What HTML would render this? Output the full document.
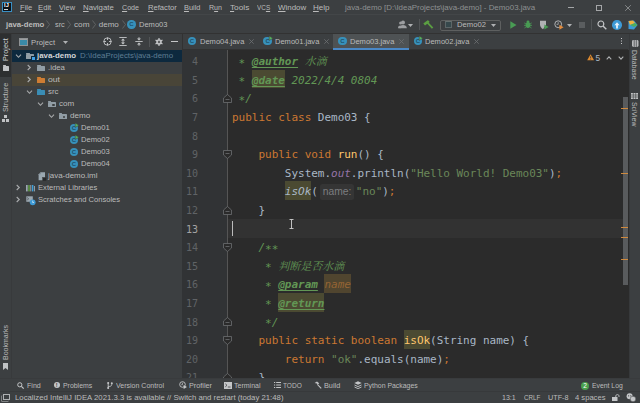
<!DOCTYPE html>
<html><head><meta charset="utf-8"><title>java-demo - Demo03.java</title>
<style>
*{box-sizing:border-box;margin:0;padding:0}
html,body{width:640px;height:403px;overflow:hidden;background:#3c3f41}
body{position:relative;font-family:"Liberation Sans","Noto Sans CJK SC",sans-serif;font-size:7.6px;color:#bbbbbb;line-height:1}
.a{position:absolute;white-space:nowrap}
.t{position:absolute;white-space:nowrap;line-height:10px;height:10px}
.v{position:absolute;white-space:nowrap;line-height:9px;height:9px;transform-origin:0 0}
u{text-decoration:underline;text-underline-offset:1px;text-decoration-thickness:0.6px}
svg{position:absolute;overflow:visible}
#ed{position:absolute;left:182px;top:50px;width:447px;height:327.5px;background:#2b2b2b;overflow:hidden}
#gut{position:absolute;left:0;top:0;width:46px;height:328px;background:#313335;border-right:1px solid #555555}
.ln{position:absolute;left:0;width:16.1px;text-align:right;font-family:"DejaVu Sans Mono","Liberation Mono",monospace;font-size:10px;color:#606366;line-height:18.6px;height:18.6px}
.cl{position:absolute;left:50px;font-family:"DejaVu Sans Mono","Liberation Mono","Noto Serif CJK SC",monospace;font-size:11px;letter-spacing:-0.02px;color:#a9b7c6;line-height:18.6px;height:18.6px;white-space:pre}
.k{color:#cc7832}.s{color:#6a8759}.d{color:#629755;font-style:italic}
.dt{color:#629755;font-style:italic;font-weight:bold;text-decoration:underline;text-decoration-thickness:1px;text-underline-offset:1.5px}
.as{position:relative;top:1.6px}
.f{color:#ffc66d}.i{font-style:italic}.p{color:#9373a5;font-style:italic}
.hl{background:#4b4a32;padding:4.1px 0 1.7px 0}
.hint{display:inline-block;vertical-align:top;margin:1px 1.4px 0 1.9px;height:15.8px;line-height:15.4px;width:34.7px;text-align:center;font-family:"Liberation Sans",sans-serif;font-size:10.3px;letter-spacing:0;color:#7c7e80;background:#353535;border-radius:2.5px;font-style:normal}
.cicon{width:8.4px;height:8.4px;border-radius:50%;background:#3791bb;color:#1f506a;font-size:6px;font-weight:bold;line-height:8.4px;text-align:center;font-family:"Liberation Sans",sans-serif}
.fold{position:absolute;width:8.4px;height:5.4px;border-radius:0.6px}
.fold::before{content:"";position:absolute;left:0;top:-1px;width:3.6px;height:1.4px;background:inherit;border-radius:0.5px 0.5px 0 0}
</style></head><body>
<!-- ===== menu bar ===== -->
<div class="a" style="left:0;top:0;width:640px;height:15px;background:#3c3f41"></div>
<div class="a" style="left:2px;top:2px;width:10px;height:10px;background:#0c1118;border:1px solid #3a8fc4"></div>
<div class="a" style="left:3.9px;top:3.4px;font-size:5.6px;font-weight:bold;color:#fff;line-height:5px;letter-spacing:0.3px">IJ</div>
<div class="a" style="left:3.9px;top:9.3px;width:3.8px;height:0.8px;background:#d8d8d8"></div>
<div class="t" style="left:19.5px;top:2.5px;font-size:8.0px;transform-origin:0 0;transform:scaleX(0.951);"><u>F</u>ile</div>
<div class="t" style="left:38px;top:2.5px;font-size:8.0px;transform-origin:0 0;transform:scaleX(0.960);"><u>E</u>dit</div>
<div class="t" style="left:59px;top:2.5px;font-size:8.0px;transform-origin:0 0;transform:scaleX(0.930);"><u>V</u>iew</div>
<div class="t" style="left:82.5px;top:2.5px;font-size:8.0px;transform-origin:0 0;transform:scaleX(0.974);"><u>N</u>avigate</div>
<div class="t" style="left:121.75px;top:2.5px;font-size:8.0px;transform-origin:0 0;transform:scaleX(0.889);"><u>C</u>ode</div>
<div class="t" style="left:147.5px;top:2.5px;font-size:8.0px;transform-origin:0 0;transform:scaleX(0.951);"><u>R</u>efactor</div>
<div class="t" style="left:184.25px;top:2.5px;font-size:8.0px;transform-origin:0 0;transform:scaleX(0.927);"><u>B</u>uild</div>
<div class="t" style="left:208.75px;top:2.5px;font-size:8.0px;transform-origin:0 0;transform:scaleX(0.886);">R<u>u</u>n</div>
<div class="t" style="left:229.5px;top:2.5px;font-size:8.0px;transform-origin:0 0;transform:scaleX(1.031);"><u>T</u>ools</div>
<div class="t" style="left:257px;top:2.5px;font-size:8.0px;transform-origin:0 0;transform:scaleX(0.800);">VC<u>S</u></div>
<div class="t" style="left:277.5px;top:2.5px;font-size:8.0px;transform-origin:0 0;transform:scaleX(0.992);"><u>W</u>indow</div>
<div class="t" style="left:313px;top:2.5px;font-size:8.0px;transform-origin:0 0;transform:scaleX(1.004);"><u>H</u>elp</div>
<div class="t" style="left:345px;top:2.5px;font-size:8.0px;transform-origin:0 0;transform:scaleX(0.988);color:#8e9192">java-demo [D:\IdeaProjects\java-demo] - Demo03.java</div>
<div class="a" style="left:568px;top:7.2px;width:6px;height:0.7px;background:#a4a6a8"></div>
<div class="a" style="left:596.2px;top:4.5px;width:6px;height:6px;border:0.7px solid #a4a6a8"></div>
<svg style="left:624.5px;top:4.5px" width="6" height="6" viewBox="0 0 6 6"><path d="M0.2 0.2L5.8 5.8M5.8 0.2L0.2 5.8" stroke="#a4a6a8" stroke-width="0.7" fill="none"/></svg>
<!-- ===== nav bar ===== -->
<div class="a" style="left:0;top:14.3px;width:640px;height:0.8px;background:#434648"></div>
<div class="a" style="left:0;top:15px;width:640px;height:19px;background:#3c3f41;border-bottom:1px solid #323232"></div>
<div class="t" style="left:5.5px;top:19.6px;font-size:8.0px;font-weight:bold;transform-origin:0 0;transform:scaleX(0.969);">java-demo</div>
<div class="t" style="left:54.5px;top:19.6px;font-size:8.0px;transform-origin:0 0;transform:scaleX(0.913);">src</div>
<div class="t" style="left:73.75px;top:19.6px;font-size:8.0px;transform-origin:0 0;transform:scaleX(1.025);">com</div>
<div class="t" style="left:98.75px;top:19.6px;font-size:8.0px;transform-origin:0 0;transform:scaleX(1.000);">demo</div>
<div class="t" style="left:138.75px;top:19.6px;font-size:8.0px;transform-origin:0 0;transform:scaleX(0.941);">Demo03</div>
<svg style="left:46px;top:20px" width="4" height="9" viewBox="0 0 4 9"><path d="M0.5 0.5L3.5 4.5L0.5 8.5" stroke="#6e7173" stroke-width="0.7" fill="none"/></svg>
<svg style="left:67px;top:20px" width="4" height="9" viewBox="0 0 4 9"><path d="M0.5 0.5L3.5 4.5L0.5 8.5" stroke="#6e7173" stroke-width="0.7" fill="none"/></svg>
<svg style="left:91.5px;top:20px" width="4" height="9" viewBox="0 0 4 9"><path d="M0.5 0.5L3.5 4.5L0.5 8.5" stroke="#6e7173" stroke-width="0.7" fill="none"/></svg>
<svg style="left:121.5px;top:20px" width="4" height="9" viewBox="0 0 4 9"><path d="M0.5 0.5L3.5 4.5L0.5 8.5" stroke="#6e7173" stroke-width="0.7" fill="none"/></svg>
<div class="a cicon" style="left:127.2px;top:20.2px">C</div>
<!-- ===== run toolbar ===== -->
<svg style="left:397.7px;top:20.3px" width="9" height="9" viewBox="0 0 9 9"><circle cx="5" cy="2.4" r="2" fill="#9d9fa1"/><path d="M1.4 8.2C1.4 5.6 3 4.9 5 4.9S8.8 5.6 8.8 8.2Z" fill="#9d9fa1"/><circle cx="2.6" cy="3" r="1.5" fill="#9d9fa1"/><path d="M0 8.2C0 6 1 5.4 2.6 5.4V8.2Z" fill="#9d9fa1"/></svg>
<svg style="left:408px;top:23.5px" width="5" height="3" viewBox="0 0 5 3"><path d="M0 0H5L2.5 3Z" fill="#afb1b3"/></svg>
<div class="a" style="left:419px;top:19px;width:1px;height:11px;background:#515456"></div>
<svg style="left:422.5px;top:19.8px" width="10.5" height="9" viewBox="0 0 10.5 9"><path d="M0.3 3.6L4.6 0.2L6.2 0.9L6.4 2.2L2 5.6Z" fill="#5b9e42"/><path d="M3.6 3L5 1.9L10.3 7.4L8.9 8.8Z" fill="#5b9e42"/></svg>
<div class="a" style="left:439.5px;top:19.5px;width:61.5px;height:11.5px;border:1px solid #5e6060;border-radius:2px;background:#3c3f41"></div>
<div class="a" style="left:444.8px;top:21.3px;width:7.4px;height:6.8px;border:0.8px solid #5c6668;border-top:1.4px solid #66706f;background:#36484c"></div>
<div class="t" style="left:457px;top:20.3px;font-size:7.65px">Demo02</div>
<svg style="left:491px;top:23.5px" width="5" height="3" viewBox="0 0 5 3"><path d="M0 0H5L2.5 3Z" fill="#afb1b3"/></svg>
<svg style="left:509.5px;top:21px" width="7" height="8" viewBox="0 0 7 8"><path d="M0.3 0.3L6.5 4L0.3 7.7Z" fill="#499c54"/></svg>
<svg style="left:524px;top:20.3px" width="8" height="9" viewBox="0 0 9 10"><ellipse cx="4.5" cy="5.6" rx="2.6" ry="3.4" fill="#499c54"/><circle cx="4.5" cy="2" r="1.6" fill="#499c54"/><path d="M0.3 3.2L2.4 4.6M8.7 3.2L6.6 4.6M0 6H9M0.5 9L2.4 7.6M8.5 9L6.6 7.6" stroke="#499c54" stroke-width="0.9" fill="none"/></svg>
<svg style="left:539px;top:20px" width="10" height="10" viewBox="0 0 10 10"><path d="M1 0.8H7V5L4 9.2C2 8 1 6.4 1 4.6Z" fill="#afb1b3"/><path d="M5.4 4.6L9.6 7L5.4 9.6Z" fill="#499c54"/></svg>
<svg style="left:553.5px;top:20px" width="10" height="10" viewBox="0 0 10 10"><circle cx="4.2" cy="4.2" r="3.4" fill="none" stroke="#afb1b3" stroke-width="1"/><path d="M4.2 2.2V4.4H2.6" stroke="#afb1b3" stroke-width="0.8" fill="none"/><path d="M5.4 4.8L9.6 7.2L5.4 9.8Z" fill="#e08a3c"/></svg>
<svg style="left:567px;top:23.5px" width="5" height="3" viewBox="0 0 5 3"><path d="M0 0H5L2.5 3Z" fill="#afb1b3"/></svg>
<div class="a" style="left:578.5px;top:21.5px;width:6.5px;height:6.5px;background:#5a5d5f"></div>
<div class="a" style="left:591px;top:19px;width:1px;height:11px;background:#515456"></div>
<svg style="left:596.5px;top:20px" width="10" height="10" viewBox="0 0 10 10"><circle cx="3.9" cy="3.9" r="2.9" fill="none" stroke="#c4c6c8" stroke-width="1.2"/><path d="M6 6L9.3 9.3" stroke="#c4c6c8" stroke-width="1.4"/></svg>
<div class="a" style="left:612px;top:20px;width:9.5px;height:9.5px;border-radius:50%;background:#3d9ad6"></div>
<svg style="left:614px;top:21.5px" width="6" height="7" viewBox="0 0 6 7"><path d="M3 0.3L5.6 3.2H3.9V6.4H2.1V3.2H0.4Z" fill="#e8f3fb"/></svg>
<svg style="left:628px;top:20px" width="10" height="10" viewBox="0 0 10 10"><path d="M0.5 1L6 0.5L9.5 5L6 9.5L0.5 9Z" fill="#3d9ad6"/><path d="M0.5 1L5 0.6L7 3L2 5Z" fill="#f0b23c"/><path d="M2 5L7 3L9.5 5L6 7Z" fill="#4fae5c"/></svg>
<!-- ===== left strip ===== -->
<div class="a" style="left:0;top:34px;width:12px;height:344px;background:#3c3f41;border-right:1px solid #383a3c"></div>
<div class="a" style="left:0;top:34px;width:11px;height:42.5px;background:#2d2f30"></div>
<div class="v" style="left:1px;top:61.3px;transform:rotate(-90deg);font-size:7.3px;color:#d0d2d4">Project</div>
<div class="fold" style="left:2.5px;top:66px;width:6.5px;height:4.6px;background:#c0c2c4"></div>
<div class="v" style="left:1px;top:112.2px;transform:rotate(-90deg);font-size:7.2px">Structure</div>
<svg style="left:2px;top:115px" width="7" height="7" viewBox="0 0 7 7"><rect x="2" y="0" width="3" height="3" fill="#c0c2c4"/><rect x="0" y="4" width="3" height="3" fill="#c0c2c4"/><rect x="4" y="4" width="3" height="3" fill="#c0c2c4"/></svg>
<div class="v" style="left:1px;top:359.8px;transform:rotate(-90deg);font-size:7px">Bookmarks</div>
<svg style="left:3px;top:363px" width="5" height="7" viewBox="0 0 5 7"><path d="M0 0H5V7L2.5 5L0 7Z" fill="#c0c2c4"/></svg>
<!-- ===== project panel ===== -->
<div class="a" style="left:12px;top:34px;width:170px;height:344px;background:#3c3f41"></div>
<div class="a" style="left:19px;top:38.1px;width:9px;height:7.5px;border:1.1px solid #8f9294;background:#3a8aa8;box-shadow:inset 0 1px 0 #9da0a2"></div>
<div class="t" style="left:30.5px;top:37.5px;font-size:8.0px;transform-origin:0 0;transform:scaleX(0.965);">Project</div>
<svg style="left:62.5px;top:40.5px" width="5" height="3" viewBox="0 0 5 3"><path d="M0 0H5L2.5 3Z" fill="#afb1b3"/></svg>
<svg style="left:103px;top:37px" width="9" height="9" viewBox="0 0 9 9"><circle cx="4.5" cy="4.5" r="3.7" fill="none" stroke="#c4c6c8" stroke-width="0.9"/><path d="M4.5 0.5V3M4.5 6V8.5M0.5 4.5H3M6 4.5H8.5" stroke="#c4c6c8" stroke-width="0.9"/></svg>
<svg style="left:119px;top:37px" width="8" height="9" viewBox="0 0 8 9"><path d="M0.3 0.5H7.7M0.3 8.5H7.7" stroke="#c4c6c8" stroke-width="0.9"/><path d="M4 1.6L6 3.6H2ZM4 7.4L6 5.4H2Z" fill="#c4c6c8"/><path d="M4 3V6" stroke="#c4c6c8" stroke-width="0.9"/></svg>
<svg style="left:135px;top:37px" width="8" height="9" viewBox="0 0 8 9"><path d="M0.3 4.5H7.7" stroke="#c4c6c8" stroke-width="0.9"/><path d="M4 3.4L6 1.4H2ZM4 5.6L6 7.6H2Z" fill="#c4c6c8"/><path d="M4 0.2V2M4 7V8.8" stroke="#c4c6c8" stroke-width="0.9"/></svg>
<div class="a" style="left:148.5px;top:37px;width:1px;height:10px;background:#515456"></div>
<svg style="left:154.5px;top:37.5px" width="8" height="8" viewBox="0 0 8 8"><circle cx="4" cy="4" r="2.1" fill="none" stroke="#c4c6c8" stroke-width="1.3"/><path d="M4 0V8M0.5 2L7.5 6M0.5 6L7.5 2" stroke="#c4c6c8" stroke-width="1.2"/><circle cx="4" cy="4" r="1" fill="#3c3f41"/></svg>
<div class="a" style="left:170.5px;top:41px;width:7px;height:1px;background:#c4c6c8"></div>
<div class="a" style="left:12px;top:50px;width:170px;height:12px;background:#0d293e"></div>
<div class="a" style="left:12px;top:74px;width:170px;height:12px;background:#494538"></div>
<svg style="left:14.7px;top:53.5px" width="7" height="4" viewBox="0 0 7 4"><path d="M1 0.7L3.5 3.3L6 0.7" stroke="#a8aaac" stroke-width="1.1" fill="none"/></svg>
<div class="fold" style="left:26px;top:53.7px;background:#919da5"></div>
<div class="a" style="left:31.3px;top:56.4px;width:4.6px;height:4.6px;background:#3fa0e6;border:0.6px solid #0d293e"></div>
<div class="t" style="left:37px;top:51px;font-size:7.9px;font-weight:bold;transform-origin:0 0;transform:scaleX(1.001);color:#d4d6d8">java-demo</div>
<div class="t" style="left:80px;top:51px;font-size:7.9px;transform-origin:0 0;transform:scaleX(1.001);color:#5f7d93">D:\IdeaProjects\java-demo</div>
<svg style="left:27px;top:64.1px" width="4" height="7" viewBox="0 0 4 7"><path d="M0.7 1L3.3 3.5L0.7 6" stroke="#a8aaac" stroke-width="1.1" fill="none"/></svg>
<div class="fold" style="left:37px;top:65.7px;background:#919da5"></div>
<div class="t" style="left:47.5px;top:63px;font-size:7.9px;transform-origin:0 0;transform:scaleX(0.992);">.idea</div>
<svg style="left:27px;top:76.1px" width="4" height="7" viewBox="0 0 4 7"><path d="M0.7 1L3.3 3.5L0.7 6" stroke="#a8aaac" stroke-width="1.1" fill="none"/></svg>
<div class="fold" style="left:37px;top:77.7px;background:#cf7d33"></div>
<div class="t" style="left:47.5px;top:75px;font-size:7.9px;transform-origin:0 0;transform:scaleX(1.093);">out</div>
<svg style="left:25.5px;top:89.7px" width="7" height="4" viewBox="0 0 7 4"><path d="M1 0.7L3.5 3.3L6 0.7" stroke="#a8aaac" stroke-width="1.1" fill="none"/></svg>
<div class="fold" style="left:37px;top:89.7px;background:#3a8db5"></div>
<div class="t" style="left:47.5px;top:87px;font-size:7.9px;transform-origin:0 0;transform:scaleX(0.996);">src</div>
<svg style="left:36.5px;top:101.7px" width="7" height="4" viewBox="0 0 7 4"><path d="M1 0.7L3.5 3.3L6 0.7" stroke="#a8aaac" stroke-width="1.1" fill="none"/></svg>
<div class="fold" style="left:47.9px;top:101.7px;background:#919da5"></div>
<div class="a" style="left:52.4px;top:104px;width:2.2px;height:2.2px;border-radius:50%;background:#3c3f41"></div>
<div class="t" style="left:58.75px;top:99px;font-size:7.9px;transform-origin:0 0;transform:scaleX(1.021);">com</div>
<svg style="left:47.5px;top:113.7px" width="7" height="4" viewBox="0 0 7 4"><path d="M1 0.7L3.5 3.3L6 0.7" stroke="#a8aaac" stroke-width="1.1" fill="none"/></svg>
<div class="fold" style="left:58.8px;top:113.7px;background:#919da5"></div>
<div class="a" style="left:63.3px;top:116px;width:2.2px;height:2.2px;border-radius:50%;background:#3c3f41"></div>
<div class="t" style="left:69.7px;top:111px;font-size:7.9px;transform-origin:0 0;transform:scaleX(1.028);">demo</div>
<div class="a cicon" style="left:69.7px;top:123.8px">C</div>
<svg style="left:75.0px;top:122.8px" width="4" height="4.5" viewBox="0 0 4 4.5"><path d="M0.2 0L4 2.2L0.2 4.5Z" fill="#57b35d" stroke="#3c3f41" stroke-width="0.5"/></svg>
<div class="t" style="left:80.6px;top:123px;font-size:7.9px;transform-origin:0 0;transform:scaleX(0.964);">Demo01</div>
<div class="a cicon" style="left:69.7px;top:135.8px">C</div>
<svg style="left:75.0px;top:134.8px" width="4" height="4.5" viewBox="0 0 4 4.5"><path d="M0.2 0L4 2.2L0.2 4.5Z" fill="#57b35d" stroke="#3c3f41" stroke-width="0.5"/></svg>
<div class="t" style="left:80.6px;top:135px;font-size:7.9px;transform-origin:0 0;transform:scaleX(0.964);">Demo02</div>
<div class="a cicon" style="left:69.7px;top:147.8px">C</div>
<div class="t" style="left:80.6px;top:147px;font-size:7.9px;transform-origin:0 0;transform:scaleX(0.964);">Demo03</div>
<div class="a cicon" style="left:69.7px;top:159.8px">C</div>
<div class="t" style="left:80.6px;top:159px;font-size:7.9px;transform-origin:0 0;transform:scaleX(0.964);">Demo04</div>
<svg style="left:38px;top:171.5px" width="8" height="9" viewBox="0 0 8 9"><path d="M2.5 0.2H7V8.2H0.6V2.2Z" fill="#9aa7b0"/><path d="M0.6 2.2H2.5V0.2Z" fill="#6b757b"/><rect x="4.6" y="5.4" width="3.8" height="3.6" fill="#26282a" stroke="#3c3f41" stroke-width="0.5"/></svg>
<div class="t" style="left:47.8px;top:171px;font-size:7.9px;transform-origin:0 0;transform:scaleX(1.007);">java-demo.iml</div>
<svg style="left:16.2px;top:184.1px" width="4" height="7" viewBox="0 0 4 7"><path d="M0.7 1L3.3 3.5L0.7 6" stroke="#a8aaac" stroke-width="1.1" fill="none"/></svg>
<svg style="left:26px;top:184px" width="9" height="8" viewBox="0 0 9 8"><rect x="0" y="1" width="1.7" height="6.4" fill="#9aa7b0"/><rect x="2.3" y="1" width="1.4" height="6.4" fill="#62a644"/><rect x="4.3" y="1" width="1" height="6.4" fill="#9aa7b0"/><rect x="6" y="1" width="1.4" height="6.4" fill="#3e9fd8"/><rect x="8" y="2" width="0.9" height="5.4" fill="#9aa7b0"/></svg>
<div class="t" style="left:37.5px;top:183px;font-size:7.9px;transform-origin:0 0;transform:scaleX(0.966);">External Libraries</div>
<svg style="left:16.2px;top:196.1px" width="4" height="7" viewBox="0 0 4 7"><path d="M0.7 1L3.3 3.5L0.7 6" stroke="#a8aaac" stroke-width="1.1" fill="none"/></svg>
<svg style="left:26px;top:195.5px" width="10" height="10" viewBox="0 0 10 10"><rect x="0.3" y="0.3" width="6.5" height="5.5" fill="#9aa7b0"/><path d="M1.2 1.6L2.6 2.8L1.2 4" stroke="#3c3f41" stroke-width="0.7" fill="none"/><circle cx="6.7" cy="6.3" r="2.9" fill="#3d9ad6"/><path d="M6.7 4.6V6.5H8" stroke="#e8f3fb" stroke-width="0.7" fill="none"/></svg>
<div class="t" style="left:37.5px;top:195px;font-size:7.9px;transform-origin:0 0;transform:scaleX(0.960);">Scratches and Consoles</div>
<!-- ===== editor tabs ===== -->
<div class="a" style="left:182px;top:34px;width:446px;height:16px;background:#3c3f41;border-bottom:1px solid #323232"></div>
<div class="a" style="left:182px;top:34px;width:1px;height:344px;background:#323232"></div>
<div class="a" style="left:333px;top:34px;width:76px;height:16px;background:#4e5254;border-bottom:2px solid #4a88c7"></div>
<div class="a cicon" style="left:187.8px;top:36.9px">C</div>
<div class="t" style="left:200px;top:36.9px;font-size:7.9px;transform-origin:0 0;transform:scaleX(0.953);">Demo04.java</div>
<svg style="left:248.5px;top:39px" width="5" height="5" viewBox="0 0 5 5"><path d="M0.3 0.3L4.7 4.7M4.7 0.3L0.3 4.7" stroke="#6e7173" stroke-width="0.8" fill="none"/></svg>
<div class="a cicon" style="left:263.40000000000003px;top:36.9px">C</div>
<svg style="left:268.6px;top:36.3px" width="4" height="4.5" viewBox="0 0 4 4.5"><path d="M0.2 0L4 2.2L0.2 4.5Z" fill="#57b35d" stroke="#3c3f41" stroke-width="0.5"/></svg>
<div class="t" style="left:274.5px;top:36.9px;font-size:7.9px;transform-origin:0 0;transform:scaleX(0.953);">Demo01.java</div>
<svg style="left:323.7px;top:39px" width="5" height="5" viewBox="0 0 5 5"><path d="M0.3 0.3L4.7 4.7M4.7 0.3L0.3 4.7" stroke="#6e7173" stroke-width="0.8" fill="none"/></svg>
<div class="a cicon" style="left:338.3px;top:36.9px">C</div>
<div class="t" style="left:350px;top:36.9px;font-size:7.9px;transform-origin:0 0;transform:scaleX(0.953);">Demo03.java</div>
<svg style="left:398.5px;top:39px" width="5" height="5" viewBox="0 0 5 5"><path d="M0.3 0.3L4.7 4.7M4.7 0.3L0.3 4.7" stroke="#6e7173" stroke-width="0.8" fill="none"/></svg>
<div class="a cicon" style="left:413.8px;top:36.9px">C</div>
<svg style="left:419px;top:36.3px" width="4" height="4.5" viewBox="0 0 4 4.5"><path d="M0.2 0L4 2.2L0.2 4.5Z" fill="#57b35d" stroke="#3c3f41" stroke-width="0.5"/></svg>
<div class="t" style="left:425px;top:36.9px;font-size:7.9px;transform-origin:0 0;transform:scaleX(0.953);">Demo02.java</div>
<svg style="left:473.5px;top:39px" width="5" height="5" viewBox="0 0 5 5"><path d="M0.3 0.3L4.7 4.7M4.7 0.3L0.3 4.7" stroke="#6e7173" stroke-width="0.8" fill="none"/></svg>
<div class="a" style="left:620.5px;top:38px;width:1.4px;height:1.4px;background:#c8cacc;box-shadow:0 2.5px 0 #c8cacc,0 5px 0 #c8cacc"></div>
<!-- ===== editor ===== -->
<div id="ed">
<div class="a" style="left:46px;top:169.30px;width:400px;height:18.6px;background:#323232"></div>
<div id="gut"></div>
<div class="ln" style="top:-15.50px;color:#606366">3</div>
<div class="ln" style="top:3.10px;color:#606366">4</div>
<div class="ln" style="top:21.70px;color:#606366">5</div>
<div class="ln" style="top:40.30px;color:#606366">6</div>
<div class="ln" style="top:58.90px;color:#606366">7</div>
<div class="ln" style="top:77.50px;color:#606366">8</div>
<div class="ln" style="top:96.10px;color:#606366">9</div>
<div class="ln" style="top:114.70px;color:#606366">10</div>
<div class="ln" style="top:133.30px;color:#606366">11</div>
<div class="ln" style="top:151.90px;color:#606366">12</div>
<div class="ln" style="top:170.50px;color:#a4a3a3">13</div>
<div class="ln" style="top:189.10px;color:#606366">14</div>
<div class="ln" style="top:207.70px;color:#606366">15</div>
<div class="ln" style="top:226.30px;color:#606366">16</div>
<div class="ln" style="top:244.90px;color:#606366">17</div>
<div class="ln" style="top:263.50px;color:#606366">18</div>
<div class="ln" style="top:282.10px;color:#606366">19</div>
<div class="ln" style="top:300.70px;color:#606366">20</div>
<div class="ln" style="top:319.30px;color:#606366">21</div>
<div class="cl" style="top:-15.50px"><span class="d"> <span class="as">*</span> </span></div>
<div class="cl" style="top:3.10px"><span class="d"> <span class="as">*</span> </span><span class="dt">@author</span><span class="d"> 水滴</span></div>
<div class="cl" style="top:21.70px"><span class="d"> <span class="as">*</span> </span><span class="dt hl">@date</span><span class="d"> 2022/4/4 0804</span></div>
<div class="cl" style="top:40.30px"><span class="d"> <span class="as">*</span>/</span></div>
<div class="cl" style="top:58.90px"><span class="k">public class </span>Demo03 {</div>
<div class="cl" style="top:77.50px"></div>
<div class="cl" style="top:96.10px">    <span class="k">public void </span><span class="f">run</span>() {</div>
<div class="cl" style="top:114.70px">        System.<span class="p">out</span>.println(<span class="s">"Hello World! Demo03"</span>)<span class="k">;</span></div>
<div class="cl" style="top:133.30px">        <span class="i hl">isOk</span>(<span class="hint">name:</span><span class="s">"no"</span>)<span class="k">;</span></div>
<div class="cl" style="top:151.90px">    }</div>
<div class="cl" style="top:170.50px"></div>
<div class="cl" style="top:189.10px">    <span class="d">/<span class="as">**</span></span></div>
<div class="cl" style="top:207.70px">    <span class="d"> <span class="as">*</span> 判断是否水滴</span></div>
<div class="cl" style="top:226.30px">    <span class="d"> <span class="as">*</span> </span><span class="dt">@param</span><span class="d"> </span><span class="d hl" style="color:#946434;background:#50452f">name</span></div>
<div class="cl" style="top:244.90px">    <span class="d"> <span class="as">*</span> </span><span class="dt hl">@return</span></div>
<div class="cl" style="top:263.50px">    <span class="d"> <span class="as">*</span>/</span></div>
<div class="cl" style="top:282.10px">    <span class="k">public static boolean </span><span class="f hl">isOk</span>(String name) {</div>
<div class="cl" style="top:300.70px">        <span class="k">return </span><span class="s">"ok"</span>.equals(name)<span class="k">;</span></div>
<div class="cl" style="top:319.30px">    }</div>
<div class="a" style="left:50px;top:171.30px;width:1px;height:14.5px;background:#bbbbbb"></div>
<svg style="left:41px;top:43.90px" width="9" height="9" viewBox="0 0 9 9"><path d="M0.5 8.5H8.5V4L4.5 0.5L0.5 4Z" fill="#2b2b2b" stroke="#6c6f71" stroke-width="0.8"/><path d="M2.5 5.5H6.5" stroke="#6c6f71" stroke-width="0.8"/></svg>
<svg style="left:41px;top:99.70px" width="9" height="9" viewBox="0 0 9 9"><path d="M0.5 0.5H8.5V5L4.5 8.5L0.5 5Z" fill="#2b2b2b" stroke="#6c6f71" stroke-width="0.8"/><path d="M2.5 3.5H6.5" stroke="#6c6f71" stroke-width="0.8"/></svg>
<svg style="left:41px;top:155.50px" width="9" height="9" viewBox="0 0 9 9"><path d="M0.5 8.5H8.5V4L4.5 0.5L0.5 4Z" fill="#2b2b2b" stroke="#6c6f71" stroke-width="0.8"/><path d="M2.5 5.5H6.5" stroke="#6c6f71" stroke-width="0.8"/></svg>
<svg style="left:41px;top:192.70px" width="9" height="9" viewBox="0 0 9 9"><path d="M0.5 0.5H8.5V5L4.5 8.5L0.5 5Z" fill="#2b2b2b" stroke="#6c6f71" stroke-width="0.8"/><path d="M2.5 3.5H6.5" stroke="#6c6f71" stroke-width="0.8"/></svg>
<svg style="left:41px;top:267.10px" width="9" height="9" viewBox="0 0 9 9"><path d="M0.5 8.5H8.5V4L4.5 0.5L0.5 4Z" fill="#2b2b2b" stroke="#6c6f71" stroke-width="0.8"/><path d="M2.5 5.5H6.5" stroke="#6c6f71" stroke-width="0.8"/></svg>
<svg style="left:41px;top:285.70px" width="9" height="9" viewBox="0 0 9 9"><path d="M0.5 0.5H8.5V5L4.5 8.5L0.5 5Z" fill="#2b2b2b" stroke="#6c6f71" stroke-width="0.8"/><path d="M2.5 3.5H6.5" stroke="#6c6f71" stroke-width="0.8"/></svg>
<svg style="left:41px;top:322.90px" width="9" height="9" viewBox="0 0 9 9"><path d="M0.5 8.5H8.5V4L4.5 0.5L0.5 4Z" fill="#2b2b2b" stroke="#6c6f71" stroke-width="0.8"/><path d="M2.5 5.5H6.5" stroke="#6c6f71" stroke-width="0.8"/></svg>
<svg style="left:106.5px;top:169px" width="5" height="10" viewBox="0 0 5 10"><path d="M0.5 0.5H4.5M0.5 9.5H4.5M2.5 0.5V9.5" stroke="#d0d0d0" stroke-width="0.9" fill="none"/></svg>
<svg style="left:404.7px;top:4.3px" width="7.2" height="6.6" viewBox="0 0 9 8"><path d="M4.5 0.3L8.8 7.7H0.2Z" fill="#dd8a30"/><path d="M4.5 2.8V5.2M4.5 6V6.9" stroke="#2b2b2b" stroke-width="0.9"/></svg>
<div class="t" style="left:413.5px;top:3px;font-size:8.4px;color:#a9b7c6">5</div>
<svg style="left:423.7px;top:5.7px" width="6" height="4" viewBox="0 0 6 4"><path d="M0.7 3.3L3 0.9L5.3 3.3" stroke="#aeb0b2" stroke-width="1.1" fill="none"/></svg>
<svg style="left:436.2px;top:5.7px" width="6" height="4" viewBox="0 0 6 4"><path d="M0.7 0.7L3 3.1L5.3 0.7" stroke="#aeb0b2" stroke-width="1.1" fill="none"/></svg>
<div class="a" style="left:441px;top:46.5px;width:5px;height:188.5px;background:#595b5d"></div>
<div class="a" style="left:438.5px;top:58.0px;width:7.5px;height:1px;background:#d08a3e"></div>
<div class="a" style="left:438.5px;top:123.0px;width:7.5px;height:1px;background:#d08a3e"></div>
<div class="a" style="left:438.5px;top:176.5px;width:7.5px;height:1px;background:#d08a3e"></div>
<div class="a" style="left:438.5px;top:187.0px;width:7.5px;height:1px;background:#d08a3e"></div>
<div class="a" style="left:438.5px;top:209.0px;width:7.5px;height:1px;background:#d08a3e"></div>
</div>
<!-- ===== right strip ===== -->
<div class="a" style="left:629px;top:34px;width:11px;height:344px;background:#3c3f41;border-left:1px solid #37393b"></div>
<svg style="left:632px;top:39.8px" width="6.5" height="7" viewBox="0 0 6.5 7"><rect x="0" y="0" width="6.5" height="7" rx="1.4" fill="#b8babc"/><path d="M2.2 0V7M4.3 0V7" stroke="#3c3f41" stroke-width="0.7"/></svg>
<div class="v" style="left:638.7px;top:49.8px;transform:rotate(90deg);font-size:6.9px">Database</div>
<svg style="left:631px;top:92.5px" width="7" height="6" viewBox="0 0 7 6"><rect x="0" y="0" width="7" height="6" fill="#c0c2c4"/><path d="M2.3 0V6M4.7 0V6M0 2H7M0 4H7" stroke="#3c3f41" stroke-width="0.6"/></svg>
<div class="v" style="left:638.5px;top:101.7px;transform:rotate(90deg);font-size:6.9px">SciView</div>
<!-- ===== bottom tool window bar ===== -->
<div class="a" style="left:0;top:377.5px;width:640px;height:13.5px;background:#3c3f41;border-top:1px solid #393b3d"></div>
<svg style="left:16.5px;top:381.5px" width="7" height="7" viewBox="0 0 7 7"><circle cx="2.8" cy="2.8" r="2.1" fill="none" stroke="#c4c6c8" stroke-width="1"/><path d="M4.4 4.4L6.7 6.7" stroke="#c4c6c8" stroke-width="1.2"/></svg>
<div class="t" style="left:27px;top:380.5px;font-size:7.5px;transform-origin:0 0;transform:scaleX(0.943);">Find</div>
<div class="a" style="left:53.5px;top:381.5px;width:6.5px;height:6.5px;border-radius:50%;background:#c4c6c8;color:#3c3f41;font-size:5.5px;font-weight:bold;line-height:6.5px;text-align:center">!</div>
<div class="t" style="left:63.25px;top:380.5px;font-size:7.5px;transform-origin:0 0;transform:scaleX(0.923);">Problems</div>
<svg style="left:106.5px;top:381.5px" width="6" height="7" viewBox="0 0 6 7"><path d="M1.2 0.5V6.5M1.2 4.5C4.5 4.5 4.8 3.5 4.8 1.5" stroke="#c4c6c8" stroke-width="0.9" fill="none"/><circle cx="1.2" cy="1" r="1" fill="#c4c6c8"/><circle cx="4.8" cy="1.2" r="1" fill="#c4c6c8"/><circle cx="1.2" cy="6" r="1" fill="#c4c6c8"/></svg>
<div class="t" style="left:116px;top:380.5px;font-size:7.5px;transform-origin:0 0;transform:scaleX(0.936);">Version Control</div>
<svg style="left:178.5px;top:381px" width="8" height="8" viewBox="0 0 8 8"><circle cx="3.5" cy="3.5" r="2.8" fill="none" stroke="#c4c6c8" stroke-width="0.9"/><path d="M3.5 1.8V3.7H2.2" stroke="#c4c6c8" stroke-width="0.7" fill="none"/><path d="M4.6 4L8 6L4.6 8Z" fill="#c4c6c8"/></svg>
<div class="t" style="left:188.75px;top:380.5px;font-size:7.5px;transform-origin:0 0;transform:scaleX(0.967);">Profiler</div>
<svg style="left:224px;top:381.5px" width="8" height="7" viewBox="0 0 8 7"><rect x="0" y="0" width="8" height="7" fill="#c4c6c8"/><path d="M1.3 1.8L3 3.3L1.3 4.8M3.8 5H6.5" stroke="#3c3f41" stroke-width="0.8" fill="none"/></svg>
<div class="t" style="left:234.25px;top:380.5px;font-size:7.5px;transform-origin:0 0;transform:scaleX(0.935);">Terminal</div>
<svg style="left:273.5px;top:382px" width="7" height="6" viewBox="0 0 7 6"><path d="M0 0.5H1.2M2.2 0.5H7M0 3H1.2M2.2 3H7M0 5.5H1.2M2.2 5.5H7" stroke="#c4c6c8" stroke-width="1"/></svg>
<div class="t" style="left:283.25px;top:380.5px;font-size:7.5px;transform-origin:0 0;transform:scaleX(0.871);">TODO</div>
<svg style="left:314px;top:381px" width="8" height="8" viewBox="0 0 8 8"><path d="M0.6 2L3 0.6L5.2 2.2L4 3.4L2.8 2.6Z" fill="#c4c6c8"/><path d="M3.6 3L7.6 7L6.8 7.8L3 3.8Z" fill="#c4c6c8"/></svg>
<div class="t" style="left:323.75px;top:380.5px;font-size:7.5px;transform-origin:0 0;transform:scaleX(0.974);">Build</div>
<svg style="left:353.5px;top:381px" width="8" height="8" viewBox="0 0 8 8"><path d="M4 0.3L7.7 2L4 3.7L0.3 2Z" fill="#c4c6c8"/><path d="M0.5 4L4 5.6L7.5 4M0.5 6L4 7.6L7.5 6" stroke="#c4c6c8" stroke-width="0.9" fill="none"/></svg>
<div class="t" style="left:363.75px;top:380.5px;font-size:7.5px;transform-origin:0 0;transform:scaleX(0.921);">Python Packages</div>
<div class="a" style="left:581px;top:381.5px;width:8px;height:8px;border-radius:50%;background:#49a04c;color:#ffffff;font-size:6.6px;line-height:8px;text-align:center">2</div>
<div class="t" style="left:591.75px;top:380.5px;font-size:7.5px;transform-origin:0 0;transform:scaleX(0.910);">Event Log</div>
<!-- ===== status bar ===== -->
<div class="a" style="left:0;top:391px;width:640px;height:12px;background:#3c3f41;border-top:1px solid #37393b"></div>
<div class="a" style="left:3px;top:393.5px;width:6.5px;height:6.5px;border:1px solid #aeb0b2;box-shadow:-1.2px 1.2px 0 -0.2px #3c3f41,-1.6px 1.6px 0 0 #aeb0b2"></div>
<div class="t" style="left:14.5px;top:392.5px;font-size:7.8px;transform-origin:0 0;transform:scaleX(0.996);">Localized IntelliJ IDEA 2021.3.3 is available // Switch and restart (today 21:48)</div>
<div class="t" style="left:502px;top:392.5px;font-size:7.8px;transform-origin:0 0;transform:scaleX(0.906);">13:1</div>
<div class="t" style="left:523.75px;top:392.5px;font-size:7.8px;transform-origin:0 0;transform:scaleX(0.800);">CRLF</div>
<div class="t" style="left:547.5px;top:392.5px;font-size:7.8px;transform-origin:0 0;transform:scaleX(0.927);">UTF-8</div>
<div class="t" style="left:575px;top:392.5px;font-size:7.8px;transform-origin:0 0;transform:scaleX(0.976);">4 spaces</div>
<svg style="left:612px;top:393.5px" width="8" height="7" viewBox="0 0 8 7"><rect x="0" y="3" width="5.5" height="4" fill="#c4c6c8"/><path d="M3.8 3V1.8C3.8 0.2 7 0.2 7 1.8V3" stroke="#c4c6c8" stroke-width="0.9" fill="none"/></svg>
<svg style="left:626px;top:393px" width="10" height="9" viewBox="0 0 10 9"><circle cx="3.6" cy="3.2" r="3" fill="#c4c6c8"/><circle cx="2.6" cy="2.8" r="0.6" fill="#3c3f41"/><circle cx="4.8" cy="2.8" r="0.6" fill="#3c3f41"/><circle cx="7" cy="6" r="2.8" fill="#c4c6c8" stroke="#3c3f41" stroke-width="0.5"/></svg>
</body></html>
